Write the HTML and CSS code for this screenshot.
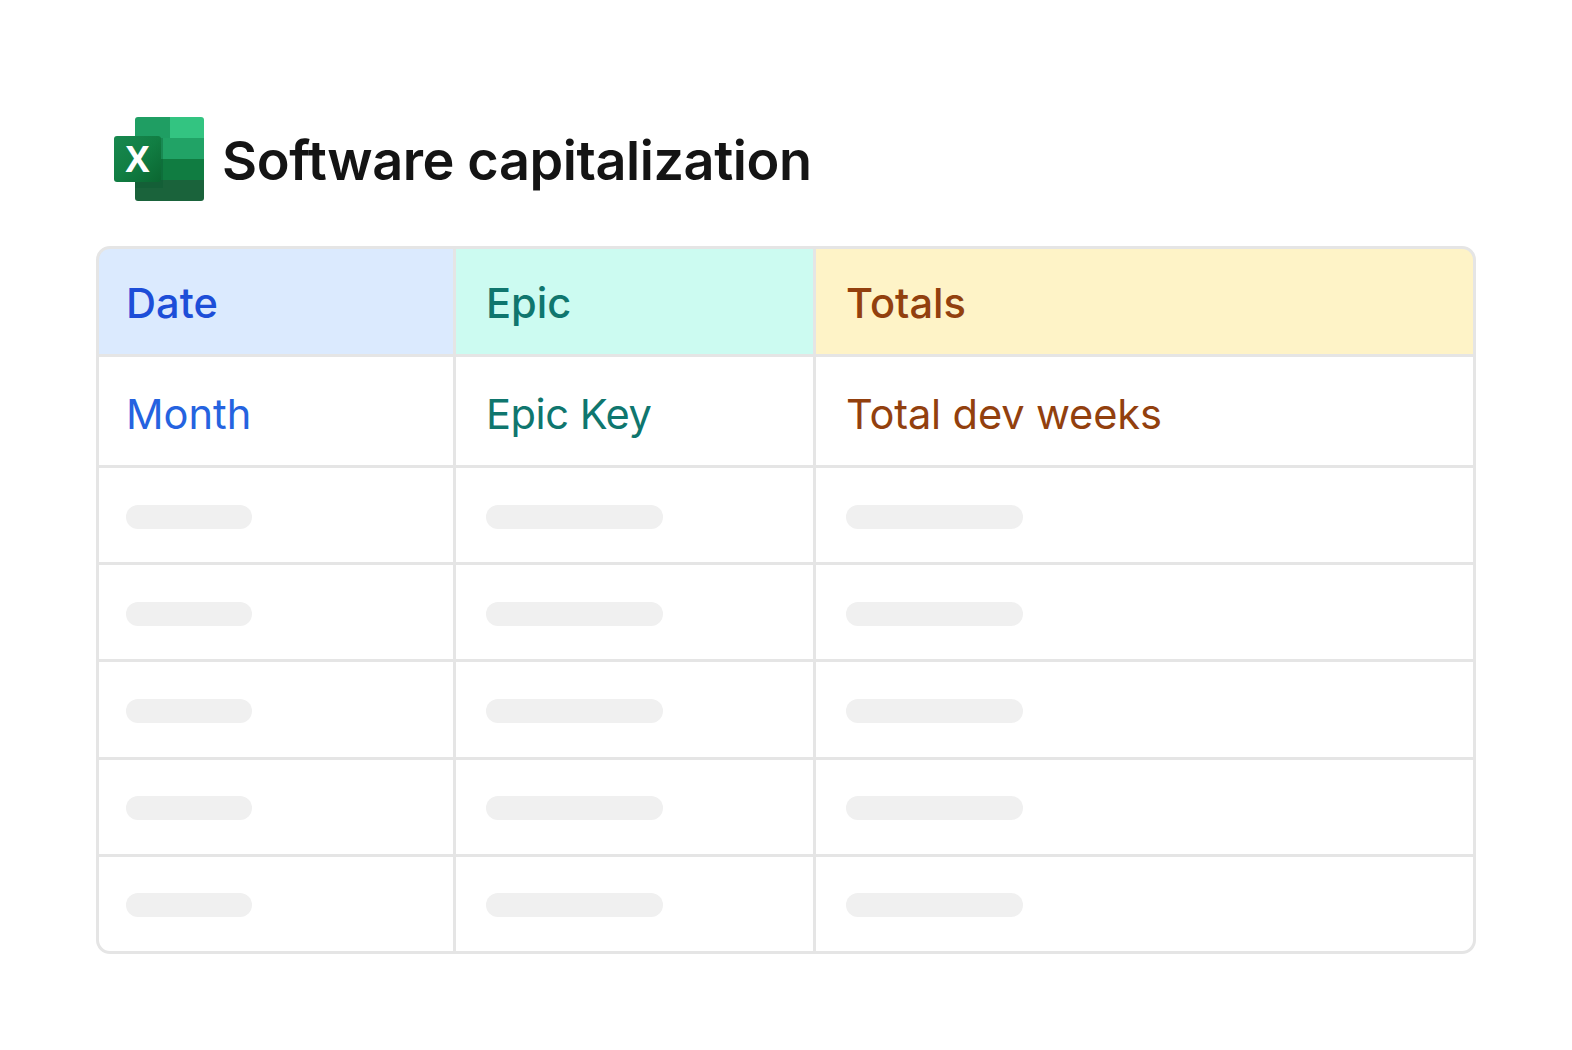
FILE: index.html
```html
<!DOCTYPE html>
<html lang="en">
<head>
<meta charset="utf-8">
<title>Software capitalization</title>
<link rel="stylesheet" href="styles.css">
</head>
<body>
<main class="page">
  <header class="title-row">
    <svg class="logo" viewBox="0 0 90 84" width="90" height="84" aria-hidden="true">
      <defs>
        <clipPath id="sheet"><rect x="21" y="0" width="69" height="84" rx="3"/></clipPath>
        <linearGradient id="front" x1="0" y1="0" x2="1" y2="1">
          <stop offset="0" stop-color="#18884f"/>
          <stop offset="0.5" stop-color="#117e43"/>
          <stop offset="1" stop-color="#0b6631"/>
        </linearGradient>
      </defs>
      <g clip-path="url(#sheet)">
        <rect x="21" y="0" width="35" height="21" fill="#1f9e63"/>
        <rect x="56" y="0" width="34" height="21" fill="#33c481"/>
        <rect x="21" y="21" width="69" height="21" fill="#21a366"/>
        <rect x="21" y="42" width="69" height="21" fill="#107c41"/>
        <rect x="21" y="63" width="69" height="21" fill="#1a633b"/>
      </g>
      <rect x="21" y="21" width="28" height="50" fill="#0c5a32" opacity="0.35"/>
      <rect x="0" y="19" width="47" height="46" rx="3" fill="url(#front)"/>
      <text class="logo-x" x="23.5" y="55" text-anchor="middle">X</text>
    </svg>
    <h1 class="title">Software capitalization</h1>
  </header>

  <section class="sheet">
    <div class="cell head col-a blue-head">Date</div>
    <div class="cell head col-b teal-head">Epic</div>
    <div class="cell head col-c amber-head">Totals</div>

    <div class="cell field col-a blue-field">Month</div>
    <div class="cell field col-b teal-field">Epic Key</div>
    <div class="cell field col-c amber-field">Total dev weeks</div>

    <div class="cell col-a"><span class="bar short"></span></div>
    <div class="cell col-b"><span class="bar"></span></div>
    <div class="cell col-c"><span class="bar"></span></div>

    <div class="cell col-a"><span class="bar short"></span></div>
    <div class="cell col-b"><span class="bar"></span></div>
    <div class="cell col-c"><span class="bar"></span></div>

    <div class="cell col-a"><span class="bar short"></span></div>
    <div class="cell col-b"><span class="bar"></span></div>
    <div class="cell col-c"><span class="bar"></span></div>

    <div class="cell col-a"><span class="bar short"></span></div>
    <div class="cell col-b"><span class="bar"></span></div>
    <div class="cell col-c"><span class="bar"></span></div>

    <div class="cell col-a"><span class="bar short"></span></div>
    <div class="cell col-b"><span class="bar"></span></div>
    <div class="cell col-c"><span class="bar"></span></div>
  </section>
</main>
</body>
</html>
```

FILE: styles.css
```css
* { box-sizing: border-box; }

html, body {
  margin: 0;
  background: #fff;
}

body {
  font-family: Inter, "Liberation Sans", sans-serif;
}

.page {
  width: 1572px;
  height: 1050px;
  padding: 117px 96px 0;
  overflow: hidden;
}

.title-row {
  display: flex;
  align-items: center;
  gap: 18px;
  height: 84px;
  margin: 0 0 45px 18px;
}

.logo { flex: none; display: block; }

.logo-x {
  font-family: "Open Sans", sans-serif;
  font-weight: 700;
  font-size: 36px;
  fill: #fff;
}

.title {
  margin: 4px 0 0;
  font-size: 54px;
  font-weight: 600;
  line-height: 80px;
  letter-spacing: -0.41px;
  color: #141414;
}

.sheet {
  display: grid;
  grid-template-columns: 354px 357px 1fr;
  grid-template-rows: 105px 108px repeat(5, 1fr);
  gap: 3px;
  width: 1380px;
  height: 708px;
  background: #e5e5e5;
  border: 3px solid #e5e5e5;
  border-radius: 14px;
  overflow: hidden;
}

.cell {
  display: flex;
  align-items: center;
  padding-top: 3px;
  background: #fff;
  font-size: 41.6px;
  line-height: 48px;
}

.col-a { padding-left: 27px; }
.col-b { padding-left: 30px; }
.col-c { padding-left: 30px; }

.head { font-weight: 500; }
.field { padding-top: 5px; }

.blue-head { background: #dbeafe; color: #1d4ed8; }
.teal-head { background: #ccfbf1; color: #0f766e; }
.amber-head { background: #fef3c7; color: #92400e; }

.blue-field { color: #2563e0; }
.teal-field { color: #0f766e; letter-spacing: -0.45px; }
.amber-field { color: #92400e; letter-spacing: -0.15px; }

.bar {
  display: block;
  width: 177px;
  height: 24px;
  border-radius: 12px;
  background: #f0f0f0;
}

.bar.short { width: 126px; }
```
